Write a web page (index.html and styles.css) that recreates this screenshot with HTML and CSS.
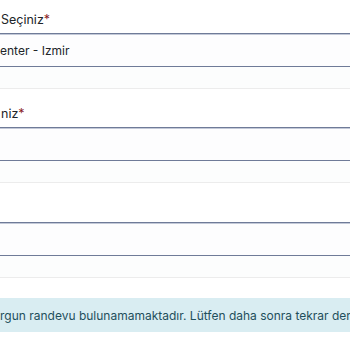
FILE: index.html
```html
<!DOCTYPE html>
<html lang="tr">
<head>
<meta charset="utf-8">
<link rel="stylesheet" href="styles.css">
</head>
<body>
<div class="form">
  <label class="label first">Seçiniz<span class="req">*</span></label>
  <div class="field"><span class="value">enter - Izmir</span></div>
  <div class="helper"></div>

  <label class="label">niz<span class="req">*</span></label>
  <div class="field"></div>
  <div class="helper"></div>

  <div class="field third"></div>
  <div class="helper"></div>

  <div class="alert"><span class="alert-text">rgun randevu bulunamamaktadır. Lütfen daha sonra tekrar den</span></div>
</div>
</body>
</html>
```
FILE: styles.css
```css
html, body {
  margin: 0;
  padding: 0;
  background: #ffffff;
  overflow: hidden;
}
body {
  font-family: Inter, "Noto Sans", sans-serif;
  font-size: 12px;
  color: #212529;
}
.form {
  display: flex;
  flex-direction: column;
  width: 350px;
  overflow: hidden;
}
.label {
  display: block;
  line-height: 20px;
  height: 20px;
  margin: 15px 0 3px 0;
  padding-left: 1px;
  font-size: 12.5px;
  white-space: nowrap;
}
.label.first {
  margin-top: 10px;
}
.req {
  color: #8b1c24;
}
.field {
  box-sizing: border-box;
  height: 34px;
  border-top: 1px solid #6f7b98;
  border-bottom: 1px solid #6f7b98;
  box-shadow: inset 0 1px 0 #c3c9d8;
  background: #fdfdfe;
  display: flex;
  align-items: center;
  white-space: nowrap;
}
.field.third {
  margin-top: 39px;
}
.value {
  padding-left: 0;
}
.helper {
  box-sizing: border-box;
  height: 22px;
  background: #fcfdfd;
  border-bottom: 1px solid #ececec;
}
.alert {
  margin-top: 20px;
  height: 34px;
  background: #d9edf2;
  color: #1f4f5c;
  display: flex;
  align-items: center;
  white-space: nowrap;
  overflow: hidden;
}
.alert-text {
  white-space: nowrap;
}
```
